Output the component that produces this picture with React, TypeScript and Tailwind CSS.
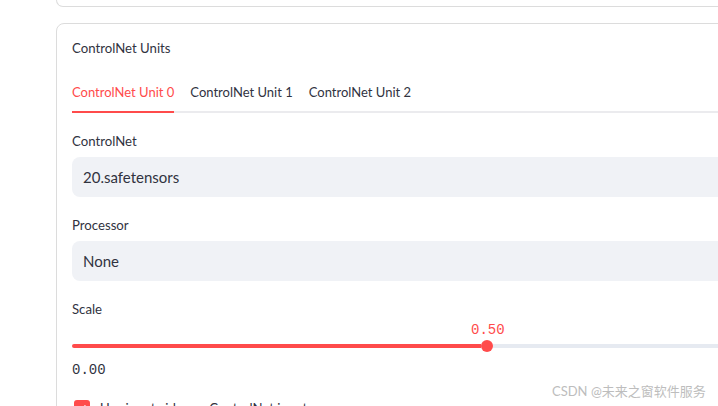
import React from 'react';

const mono = { fontFamily: '"Liberation Mono", monospace' };

const SelectBox = ({ label, value }: { label: string; value: string }) => (
  <div className="flex flex-col">
    <div className="text-[13.2px] leading-[20px] text-[#31333f]">{label}</div>
    <div className="mt-[6px] h-[40px] rounded-lg bg-[#f0f2f6] pl-[11px] flex items-center text-[15px] text-[#31333f] w-[700px]">
      {value}
    </div>
  </div>
);

const Slider = ({ value, min }: { value: string; min: string }) => (
  <div className="flex flex-col w-[830px]">
    <div className="mt-[3px] pl-[399px] h-[16px] text-[14px] leading-[16px] text-[#ff4b4b]" style={mono}>
      {value}
    </div>
    <div className="mt-[2px] flex items-center h-[12px]">
      <div className="w-[409px] h-[4px] rounded-l-full bg-[#ff4b4b]" />
      <div className="w-[12px] h-[12px] rounded-full bg-[#ff4b4b]" />
      <div className="flex-1 h-[4px] bg-[#e6eaf1]" />
    </div>
    <div className="mt-[10px] text-[14px] leading-[16px] text-[#31333f]" style={mono}>
      {min}
    </div>
  </div>
);

const App = () => {
  const tabs = ['ControlNet Unit 0', 'ControlNet Unit 1', 'ControlNet Unit 2'];

  return (
    <div
      className="relative w-[718px] h-[406px] overflow-hidden bg-white"
      style={{ fontFamily: 'Lato, "Noto Sans", sans-serif' }}
    >
      <div className="ml-[56px] w-[720px] h-[7px] border-x border-b border-[#dcdcdc] rounded-b-lg" />

      <div className="ml-[56px] mt-[16px] w-[720px] h-[420px] border border-[#dcdcdc] rounded-lg pl-[15px] pt-[14px] flex flex-col">
        <div className="text-[13.2px] leading-[20px] text-[#31333f]">ControlNet Units</div>

        <div className="mt-[24px] flex gap-[16px] border-b-2 border-[#ebebee] w-[700px]">
          {tabs.map((t, i) => (
            <div
              key={t}
              className={`pb-[9px] -mb-[2px] text-[13px] leading-[20px] border-b-2 ${
                i === 0 ? 'text-[#ff4b4b] border-[#ff4b4b]' : 'text-[#31333f] border-transparent'
              }`}
            >
              {t}
            </div>
          ))}
        </div>

        <div className="mt-[18px]">
          <SelectBox label="ControlNet" value="20.safetensors" />
        </div>
        <div className="mt-[18px]">
          <SelectBox label="Processor" value="None" />
        </div>

        <div className="mt-[18px] text-[13.2px] leading-[20px] text-[#31333f]">Scale</div>
        <Slider value="0.50" min="0.00" />

        <div className="mt-[22px] ml-[2px] flex items-center gap-[10px]">
          <div className="w-[16px] h-[16px] rounded-[3px] bg-[#ff4b4b] flex items-center justify-center">
            <svg width="10" height="10" viewBox="0 0 10 10" fill="none">
              <path d="M1.5 5.2 L4 7.5 L8.5 2.5" stroke="white" strokeWidth="1.6" />
            </svg>
          </div>
          <div className="text-[13.2px] leading-[16px] text-[#31333f]">
            Use input video as ControlNet input
          </div>
        </div>
      </div>

      <div
        className="absolute left-[552px] top-[383px] text-[13px] leading-[16px] text-[#bdbdbd] whitespace-nowrap"
        style={{ fontFamily: 'Lato, "Noto Sans CJK SC", sans-serif' }}
      >
        CSDN @未来之窗软件服务
      </div>
    </div>
  );
};

export default App;
